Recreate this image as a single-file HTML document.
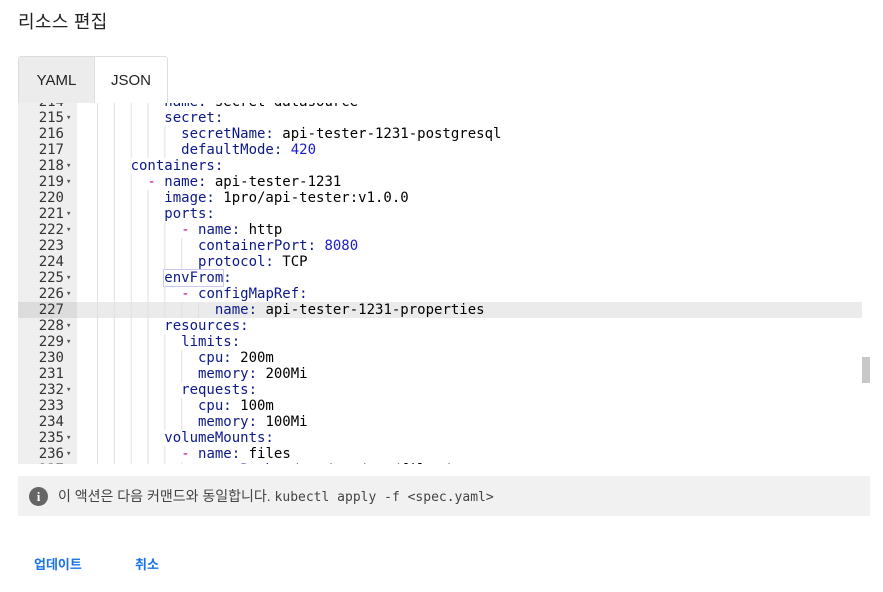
<!DOCTYPE html>
<html><head><meta charset="utf-8"><style>
body{margin:0;width:883px;height:592px;background:#fff;font-family:"Liberation Sans","Noto Sans CJK KR",sans-serif;position:relative;overflow:hidden}
h1{position:absolute;left:18px;top:8px;margin:0;font-size:18px;font-weight:normal;color:#222;letter-spacing:0.3px}
.tabs{position:absolute;left:18px;top:56px;width:148px;height:47px;border:1px solid #ddd;border-bottom:none;border-radius:3px 3px 0 0;overflow:hidden}
.tab{position:absolute;top:0;height:47px;line-height:48px;font-size:15px;color:#222;text-align:center}
.ed{position:absolute;left:18px;top:103px;width:852px;height:361px;overflow:hidden;background:#fff}
.gut{position:absolute;left:0;top:0;width:59px;height:361px;background:#efefef}
.code{position:absolute;left:0;top:-9px;width:844px;font-family:"DejaVu Sans Mono",monospace;font-size:14px}
.l{height:16px;line-height:16px;position:relative;white-space:pre}
.n{position:absolute;left:0;width:46px;text-align:right;color:#333}
.f{position:absolute;left:48px;font-size:9px;color:#555}
.t{position:absolute;left:62px;color:#000}
.g{display:inline-block;height:16px;vertical-align:top;background-image:linear-gradient(to right,#e0e0e0 1px,transparent 1px);background-size:2ch 100%}
.k{color:#0b1a8a}.v{color:#1a1ad0}.d{color:#c3008c}
.hl{background:#ebebeb}.hl .n{background:#dcdcdc;width:59px;padding-right:13px;box-sizing:border-box}
.sb{position:absolute;left:844px;top:254px;width:8px;height:26px;background:#c8c8c8}
.info{position:absolute;left:18px;top:476px;width:852px;height:40px;background:#f1f1f1;font-size:14px;color:#444;line-height:40px}
.ic{position:absolute;left:11px;top:11px;width:19px;height:19px;border-radius:50%;background:#666;color:#fff;font-size:13px;font-weight:bold;text-align:center;line-height:19px;font-family:"Liberation Serif",serif}
.mono{font-family:"DejaVu Sans Mono",monospace;font-size:13px}
.btn{position:absolute;top:554px;font-size:13px;color:#1a73e8;font-weight:bold}
</style></head><body>
<h1>리소스 편집</h1>
<div class="tabs"><div class="tab" style="left:0;width:75px;background:#ececec;border-right:1px solid #ddd">YAML</div><div class="tab" style="left:76px;width:72px">JSON</div></div>
<div class="ed"><div class="gut"></div>
<div class="code">
<div class="l"><span class="n">214</span><span class="t">  <span class="g" style="width:8ch"></span><span class="k">name:</span> secret-datasource</span></div>
<div class="l"><span class="n">215</span><span class="f">▾</span><span class="t">  <span class="g" style="width:8ch"></span><span class="k">secret:</span></span></div>
<div class="l"><span class="n">216</span><span class="t">  <span class="g" style="width:10ch"></span><span class="k">secretName:</span> api-tester-1231-postgresql</span></div>
<div class="l"><span class="n">217</span><span class="t">  <span class="g" style="width:10ch"></span><span class="k">defaultMode:</span> <span class="v">420</span></span></div>
<div class="l"><span class="n">218</span><span class="f">▾</span><span class="t">  <span class="g" style="width:4ch"></span><span class="k">containers:</span></span></div>
<div class="l"><span class="n">219</span><span class="f">▾</span><span class="t">  <span class="g" style="width:6ch"></span><span class="d">-</span> <span class="k">name:</span> api-tester-1231</span></div>
<div class="l"><span class="n">220</span><span class="t">  <span class="g" style="width:8ch"></span><span class="k">image:</span> 1pro/api-tester:v1.0.0</span></div>
<div class="l"><span class="n">221</span><span class="f">▾</span><span class="t">  <span class="g" style="width:8ch"></span><span class="k">ports:</span></span></div>
<div class="l"><span class="n">222</span><span class="f">▾</span><span class="t">  <span class="g" style="width:10ch"></span><span class="d">-</span> <span class="k">name:</span> http</span></div>
<div class="l"><span class="n">223</span><span class="t">  <span class="g" style="width:12ch"></span><span class="k">containerPort:</span> <span class="v">8080</span></span></div>
<div class="l"><span class="n">224</span><span class="t">  <span class="g" style="width:12ch"></span><span class="k">protocol:</span> TCP</span></div>
<div class="l"><span class="n">225</span><span class="f">▾</span><span class="t">  <span class="g" style="width:8ch"></span><span class="k" style="outline:1px solid #c8c8f0">envFrom</span><span class="k">:</span></span></div>
<div class="l"><span class="n">226</span><span class="f">▾</span><span class="t">  <span class="g" style="width:10ch"></span><span class="d">-</span> <span class="k">configMapRef:</span></span></div>
<div class="l hl"><span class="n">227</span><span class="t">  <span class="g" style="width:14ch"></span><span class="k">name:</span> api-tester-1231-properties</span></div>
<div class="l"><span class="n">228</span><span class="f">▾</span><span class="t">  <span class="g" style="width:8ch"></span><span class="k">resources:</span></span></div>
<div class="l"><span class="n">229</span><span class="f">▾</span><span class="t">  <span class="g" style="width:10ch"></span><span class="k">limits:</span></span></div>
<div class="l"><span class="n">230</span><span class="t">  <span class="g" style="width:12ch"></span><span class="k">cpu:</span> 200m</span></div>
<div class="l"><span class="n">231</span><span class="t">  <span class="g" style="width:12ch"></span><span class="k">memory:</span> 200Mi</span></div>
<div class="l"><span class="n">232</span><span class="f">▾</span><span class="t">  <span class="g" style="width:10ch"></span><span class="k">requests:</span></span></div>
<div class="l"><span class="n">233</span><span class="t">  <span class="g" style="width:12ch"></span><span class="k">cpu:</span> 100m</span></div>
<div class="l"><span class="n">234</span><span class="t">  <span class="g" style="width:12ch"></span><span class="k">memory:</span> 100Mi</span></div>
<div class="l"><span class="n">235</span><span class="f">▾</span><span class="t">  <span class="g" style="width:8ch"></span><span class="k">volumeMounts:</span></span></div>
<div class="l"><span class="n">236</span><span class="f">▾</span><span class="t">  <span class="g" style="width:10ch"></span><span class="d">-</span> <span class="k">name:</span> files</span></div>
<div class="l"><span class="n">237</span><span class="t">  <span class="g" style="width:12ch"></span><span class="k">mountPath:</span> /usr/src/app/files/tmp</span></div>
</div>
<div class="sb"></div>
</div>
<div class="info"><div class="ic">i</div><span style="position:absolute;left:40px">이 액션은 다음 커맨드와 동일합니다. <span class="mono">kubectl apply -f &lt;spec.yaml&gt;</span></span></div>
<div class="btn" style="left:34px">업데이트</div>
<div class="btn" style="left:135px">취소</div>
</body></html>
